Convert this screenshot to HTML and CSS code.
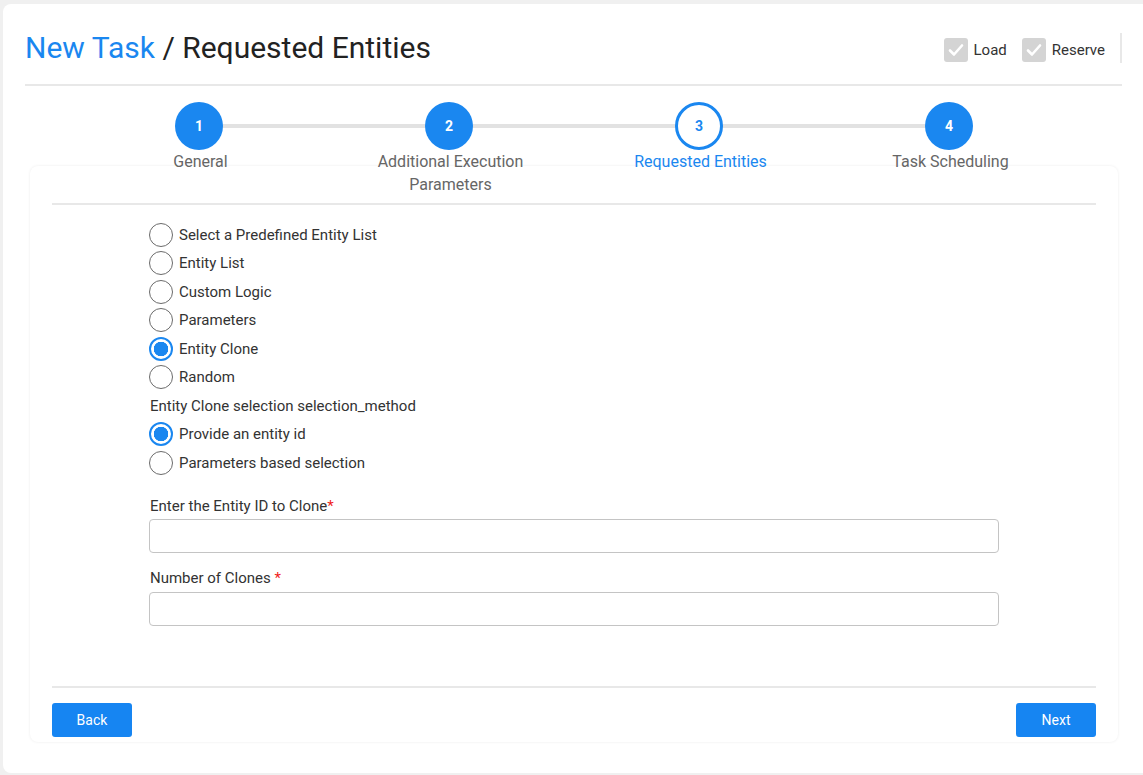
FILE: index.html
```html
<!DOCTYPE html>
<html>
<head>
<meta charset="utf-8">
<link rel="stylesheet" href="styles.css">
</head>
<body>
<div class="page">
  <div class="header">
    <h1 class="title"><span class="crumb">New Task</span> / Requested Entities</h1>
    <div class="header-actions">
      <label class="chk"><span class="chk-box"><svg viewBox="0 0 24 24" width="24" height="24"><path d="M6 12.5l4 4 8-9" fill="none" stroke="#fff" stroke-width="2.6" stroke-linecap="round" stroke-linejoin="round"/></svg></span>Load</label>
      <label class="chk"><span class="chk-box"><svg viewBox="0 0 24 24" width="24" height="24"><path d="M6 12.5l4 4 8-9" fill="none" stroke="#fff" stroke-width="2.6" stroke-linecap="round" stroke-linejoin="round"/></svg></span>Reserve</label>
      <span class="vsep"></span>
    </div>
  </div>

  <div class="stepper">
    <div class="step done"><div class="circle">1</div><div class="step-label">General</div></div>
    <div class="step done"><div class="circle">2</div><div class="step-label">Additional Execution<br>Parameters</div></div>
    <div class="step active"><div class="circle">3</div><div class="step-label">Requested Entities</div></div>
    <div class="step done"><div class="circle">4</div><div class="step-label">Task Scheduling</div></div>
  </div>

  <div class="card">
    <div class="form">
      <div class="form-inner">
        <div class="radios">
          <div class="radio"><span class="dot"></span>Select a Predefined Entity List</div>
          <div class="radio"><span class="dot"></span>Entity List</div>
          <div class="radio"><span class="dot"></span>Custom Logic</div>
          <div class="radio"><span class="dot"></span>Parameters</div>
          <div class="radio checked"><span class="dot"></span>Entity Clone</div>
          <div class="radio"><span class="dot"></span>Random</div>
        </div>
        <div class="group-label">Entity Clone selection selection_method</div>
        <div class="radios">
          <div class="radio checked"><span class="dot"></span>Provide an entity id</div>
          <div class="radio"><span class="dot"></span>Parameters based selection</div>
        </div>
        <div class="field first">
          <div class="field-label">Enter the Entity ID to Clone<span class="req">*</span></div>
          <div class="input"></div>
        </div>
        <div class="field second">
          <div class="field-label">Number of Clones <span class="req">*</span></div>
          <div class="input"></div>
        </div>
      </div>
    </div>
    <div class="footer">
      <button class="btn">Back</button>
      <button class="btn">Next</button>
    </div>
  </div>
</div>
</body>
</html>
```

FILE: styles.css
```css
html, body {
  margin: 0;
  padding: 0;
}
body {
  background: #f0f0f0;
  padding: 4px 0 0 3px;
  font-family: Roboto, "Liberation Sans", sans-serif;
  color: #333;
  overflow: hidden;
  height: 775px;
  box-sizing: border-box;
}
.page {
  background: #fff;
  border-radius: 8px 0 0 8px;
  padding: 0 21px 0 22px;
  height: 769px;
  box-sizing: border-box;
}
.header {
  display: flex;
  align-items: center;
  justify-content: space-between;
  height: 80px;
  border-bottom: 2px solid #e8e8e8;
}
.title {
  margin: 0;
  font-weight: 400;
  font-size: 30px;
  color: #222;
  padding-top: 6px;
}
.crumb {
  color: #1a87f0;
}
.header-actions {
  display: flex;
  align-items: center;
  padding-top: 8px;
}
.chk {
  display: flex;
  align-items: center;
  font-size: 15px;
  color: #333;
  margin-right: 15px;
  padding-top: 4px;
}
.chk-box {
  width: 24px;
  height: 24px;
  background: #d4d4d4;
  border-radius: 3px;
  margin-right: 6px;
  display: flex;
}
.vsep {
  width: 2px;
  height: 30px;
  background: #e8e8e8;
}
.stepper {
  display: flex;
  justify-content: center;
  margin-top: 16px;
  position: relative;
  z-index: 1;
  padding-left: 1px;
}
.step {
  width: 250px;
  display: flex;
  flex-direction: column;
  align-items: center;
  position: relative;
}
.step:not(:last-child)::after {
  content: "";
  position: absolute;
  top: 22px;
  left: 50%;
  width: 100%;
  height: 4px;
  background: #e2e2e2;
  z-index: -1;
}
.circle {
  width: 48px;
  height: 48px;
  border-radius: 50%;
  background: #1a87f0;
  color: #fff;
  font-weight: 700;
  font-size: 14px;
  display: flex;
  align-items: center;
  justify-content: center;
  box-sizing: border-box;
}
.step.active .circle {
  background: #fff;
  border: 3px solid #1a87f0;
  color: #1a87f0;
}
.step-label {
  font-size: 16px;
  line-height: 23px;
  color: #666;
  text-align: center;
  padding-left: 3px;
}
.step.active .step-label {
  color: #1a87f0;
}
.card {
  margin: -30px 4px 0 5px;
  background: #fff;
  border-radius: 8px;
  box-shadow: 0 0 3px rgba(0,0,0,0.08);
  padding: 37px 22px 5px;
}
.form {
  border-top: 2px solid #e8e8e8;
  padding: 18px 0 60px;
}
.form-inner {
  width: 850px;
  margin: 0 auto;
}
.radios {
  display: flex;
  flex-direction: column;
  gap: 4.4px;
}
.radios + .field,
.group-label + .radios {
  gap: 5px;
}
.radio {
  display: flex;
  align-items: center;
  height: 24px;
  font-size: 15px;
  color: #333;
}
.dot {
  width: 24px;
  height: 24px;
  border-radius: 50%;
  border: 1.5px solid #6b6b6b;
  box-sizing: border-box;
  margin-right: 6px;
  background: #fff;
  flex: none;
}
.radio.checked .dot {
  border: 2px solid #1a87f0;
  background: radial-gradient(circle, #1a87f0 0 7px, #fff 7.5px);
}
.group-label {
  font-size: 15px;
  color: #333;
  height: 28px;
  line-height: 28px;
  margin: 3px 0 2px 1px;
}
.field.first {
  margin-top: 22px;
}
.field.second {
  margin-top: 16px;
}
.field-label {
  font-size: 15px;
  color: #333;
  line-height: 18px;
  margin: 0 0 4px 1px;
}
.field.second .field-label {
  margin-bottom: 5px;
}
.req {
  color: #f01c1c;
}
.input {
  height: 34px;
  border: 1px solid #c4c4c4;
  border-radius: 4px;
  box-sizing: border-box;
}
.footer {
  border-top: 2px solid #e8e8e8;
  padding-top: 15px;
  display: flex;
  justify-content: space-between;
}
.btn {
  width: 80px;
  height: 34px;
  border: none;
  border-radius: 3px;
  background: #1685f2;
  color: #fff;
  font-family: Roboto, "Liberation Sans", sans-serif;
  font-size: 14px;
  padding: 0;
}
```
